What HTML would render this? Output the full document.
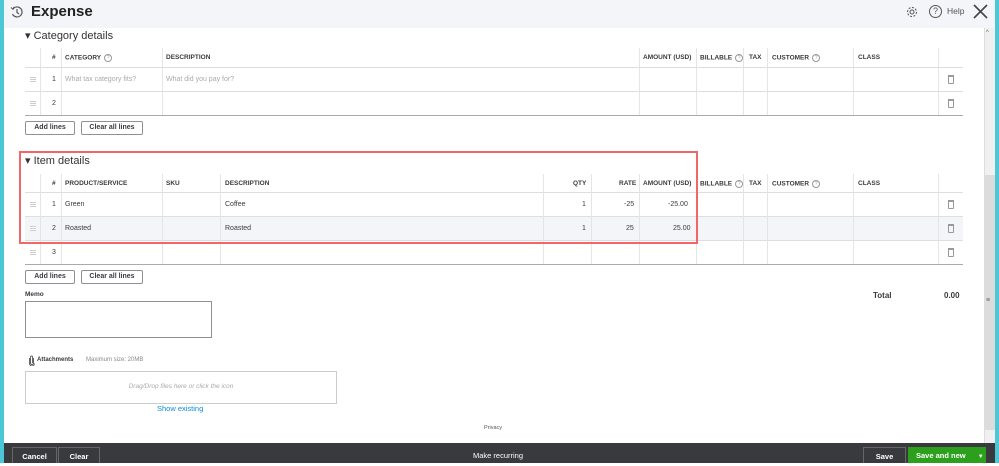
<!DOCTYPE html>
<html><head><style>
*{margin:0;padding:0;box-sizing:border-box}
body{width:999px;height:463px;position:relative;overflow:hidden;background:#fff;font-family:"Liberation Sans",sans-serif;color:#393a3d}
.a{position:absolute}
.hd{font-size:6.5px;font-weight:bold;color:#393a3d}
.t{font-size:7px}
.vl{position:absolute;width:1px;background:#e3e5e8}
.hl{position:absolute;height:1px;background:#dcdee2}
.btn{position:absolute;border:1px solid #8d9096;border-radius:2px;font-size:7px;font-weight:bold;text-align:center;line-height:12px;height:14px;background:#fff}
.trash{position:absolute;width:6px;height:9px;border:1px solid #999;border-top:2px solid #999;border-radius:0 0 1px 1px}
.drag{position:absolute;width:6px;height:5px;background:repeating-linear-gradient(#ccc 0 1px,#fff 1px 2px)}
.q{display:inline-block;width:8px;height:8px;border:1px solid #999;border-radius:50%;font-size:5px;line-height:6px;text-align:center;color:#999;font-weight:normal;vertical-align:middle;margin-left:3px}
</style></head><body>
<div class="a" style="left:0;top:0;width:4px;height:463px;background:#4cc7d6"></div>
<div class="a" style="left:995px;top:0;width:4px;height:463px;background:#4cc7d6"></div>
<div class="a" style="left:4px;top:0;width:991px;height:28px;background:#f4f5f8"></div>
<svg class="a" style="left:10px;top:5px" width="14" height="14" viewBox="0 0 14 14"><path d="M3 4A5 5 0 1 1 2.5 9" fill="none" stroke="#555" stroke-width="1.2"/><path d="M7 4v3.5l2 1.5" fill="none" stroke="#555" stroke-width="1.2"/><path d="M1 2.5l2 1.8 1-2.3" fill="none" stroke="#555" stroke-width="1"/></svg>
<div class="a" style="left:31px;top:3px;font-size:15px;font-weight:bold;color:#222">Expense</div>
<svg class="a" style="left:905px;top:5px" width="14" height="14" viewBox="0 0 14 14"><circle cx="7" cy="7" r="2" fill="none" stroke="#555"/><circle cx="7" cy="7" r="4.5" fill="none" stroke="#555" stroke-width="1" stroke-dasharray="2 1.5"/></svg>
<div class="a" style="left:929px;top:5px;width:13px;height:13px;border:1.2px solid #555;border-radius:50%;font-size:9px;text-align:center;line-height:11px;color:#555">?</div>
<div class="a" style="left:947px;top:6px;font-size:8.5px;color:#555">Help</div>
<svg class="a" style="left:973px;top:4px" width="15" height="15"><path d="M1 1L14 14M14 1L1 14" stroke="#444" stroke-width="1.6"/></svg>
<div class="a" style="left:984px;top:28px;width:11px;height:415px;background:#f0f0f0;border-left:1px solid #ddd"></div>
<div class="a" style="left:985px;top:175px;width:10px;height:255px;background:#dcdcdc"></div>
<div class="a" style="left:986px;top:30px;font-size:6px;color:#666">^</div>
<div class="a" style="left:986px;top:297px;font-size:7px;color:#666">≡</div>

<div class="a" style="left:25px;top:29px;font-size:11px;color:#333">▾ Category details</div>
<div class="hl" style="left:25px;top:67px;width:938px"></div>
<div class="hl" style="left:25px;top:91px;width:938px"></div>
<div class="hl" style="left:25px;top:115px;width:938px;background:#aaa"></div>
<div class="vl" style="left:40px;top:48px;height:67px"></div>
<div class="vl" style="left:61px;top:48px;height:67px"></div>
<div class="vl" style="left:162px;top:48px;height:67px"></div>
<div class="vl" style="left:639px;top:48px;height:67px"></div>
<div class="vl" style="left:696px;top:48px;height:67px"></div>
<div class="vl" style="left:743px;top:48px;height:67px"></div>
<div class="vl" style="left:767px;top:48px;height:67px"></div>
<div class="vl" style="left:853px;top:48px;height:67px"></div>
<div class="vl" style="left:938px;top:48px;height:67px"></div>
<div class="a hd" style="left:52px;top:54px">#</div>
<div class="a hd" style="left:65px;top:54px">CATEGORY<span class="q">?</span></div>
<div class="a hd" style="left:166px;top:54px">DESCRIPTION</div>
<div class="a hd" style="left:643px;top:54px">AMOUNT (USD)</div>
<div class="a hd" style="left:700px;top:54px">BILLABLE<span class="q">?</span></div>
<div class="a hd" style="left:749px;top:54px">TAX</div>
<div class="a hd" style="left:772px;top:54px">CUSTOMER<span class="q">?</span></div>
<div class="a hd" style="left:858px;top:54px">CLASS</div>
<div class="drag" style="left:30px;top:77px"></div><div class="a t" style="left:52px;top:76px">1</div>
<div class="a t" style="left:65px;top:76px;color:#aaa">What tax category fits?</div>
<div class="a t" style="left:166px;top:76px;color:#aaa">What did you pay for?</div>
<div class="trash" style="left:948px;top:75px"></div>
<div class="drag" style="left:30px;top:101px"></div><div class="a t" style="left:52px;top:100px">2</div>
<div class="trash" style="left:948px;top:99px"></div>
<div class="btn" style="left:25px;top:121px;width:50px">Add lines</div>
<div class="btn" style="left:81px;top:121px;width:62px">Clear all lines</div>

<div class="a" style="left:25px;top:154px;font-size:11px;color:#333">▾ Item details</div>
<div class="a" style="left:25px;top:216px;width:938px;height:24px;background:#f4f5f8"></div>
<div class="hl" style="left:25px;top:192px;width:938px"></div>
<div class="hl" style="left:25px;top:216px;width:938px"></div>
<div class="hl" style="left:25px;top:240px;width:938px"></div>
<div class="hl" style="left:25px;top:264px;width:938px;background:#aaa"></div>
<div class="vl" style="left:40px;top:174px;height:90px"></div>
<div class="vl" style="left:61px;top:174px;height:90px"></div>
<div class="vl" style="left:162px;top:174px;height:90px"></div>
<div class="vl" style="left:220px;top:174px;height:90px"></div>
<div class="vl" style="left:543px;top:174px;height:90px"></div>
<div class="vl" style="left:591px;top:174px;height:90px"></div>
<div class="vl" style="left:639px;top:174px;height:90px"></div>
<div class="vl" style="left:696px;top:174px;height:90px"></div>
<div class="vl" style="left:743px;top:174px;height:90px"></div>
<div class="vl" style="left:767px;top:174px;height:90px"></div>
<div class="vl" style="left:853px;top:174px;height:90px"></div>
<div class="vl" style="left:938px;top:174px;height:90px"></div>
<div class="a hd" style="left:52px;top:180px">#</div>
<div class="a hd" style="left:65px;top:180px">PRODUCT/SERVICE</div>
<div class="a hd" style="left:166px;top:180px">SKU</div>
<div class="a hd" style="left:225px;top:180px">DESCRIPTION</div>
<div class="a hd" style="left:573px;top:180px">QTY</div>
<div class="a hd" style="left:619px;top:180px">RATE</div>
<div class="a hd" style="left:643px;top:180px">AMOUNT (USD)</div>
<div class="a hd" style="left:700px;top:180px">BILLABLE<span class="q">?</span></div>
<div class="a hd" style="left:749px;top:180px">TAX</div>
<div class="a hd" style="left:772px;top:180px">CUSTOMER<span class="q">?</span></div>
<div class="a hd" style="left:858px;top:180px">CLASS</div>
<div class="drag" style="left:30px;top:202px"></div><div class="a t" style="left:52px;top:201px">1</div>
<div class="a t" style="left:65px;top:201px">Green</div><div class="a t" style="left:225px;top:201px">Coffee</div>
<div class="a t" style="left:582px;top:201px">1</div><div class="a t" style="left:624px;top:201px">-25</div><div class="a t" style="left:668px;top:201px">-25.00</div>
<div class="trash" style="left:948px;top:200px"></div>
<div class="drag" style="left:30px;top:226px"></div><div class="a t" style="left:52px;top:225px">2</div>
<div class="a t" style="left:65px;top:225px">Roasted</div><div class="a t" style="left:225px;top:225px">Roasted</div>
<div class="a t" style="left:582px;top:225px">1</div><div class="a t" style="left:626px;top:225px">25</div><div class="a t" style="left:673px;top:225px">25.00</div>
<div class="trash" style="left:948px;top:224px"></div>
<div class="drag" style="left:30px;top:250px"></div><div class="a t" style="left:52px;top:249px">3</div>
<div class="trash" style="left:948px;top:248px"></div>
<div class="a" style="left:19px;top:151px;width:679px;height:93px;border:2px solid #f26666"></div>
<div class="btn" style="left:25px;top:270px;width:50px">Add lines</div>
<div class="btn" style="left:81px;top:270px;width:62px">Clear all lines</div>

<div class="a" style="left:25px;top:291px;font-size:6.5px;font-weight:bold">Memo</div>
<div class="a" style="left:25px;top:301px;width:187px;height:37px;border:1px solid #8d9096"></div>
<div class="a" style="left:873px;top:291px;font-size:8px;font-weight:bold">Total</div>
<div class="a" style="left:944px;top:291px;font-size:8px;font-weight:bold">0.00</div>

<svg class="a" style="left:28px;top:355px" width="8" height="11" viewBox="0 0 8 11"><path d="M5.5 3v5a1.5 1.5 0 0 1-3 0V2a1 1 0 0 1 2 0v6" fill="none" stroke="#555" stroke-width="0.9"/><path d="M1.5 3v5.5a2.5 2.5 0 0 0 5 0" fill="none" stroke="#555" stroke-width="0.9"/></svg>
<div class="a" style="left:37px;top:357px;font-size:6px;font-weight:bold">Attachments</div>
<div class="a" style="left:86px;top:357px;font-size:6px;color:#888">Maximum size: 20MB</div>
<div class="a" style="left:25px;top:371px;width:312px;height:33px;border:1px solid #ccc;font-size:6.5px;font-style:italic;color:#aaa;text-align:center;line-height:30px">Drag/Drop files here or click the icon</div>
<div class="a" style="left:157px;top:404px;font-size:7.5px;color:#0d8bd6">Show existing</div>
<div class="a" style="left:484px;top:425px;font-size:5.5px;color:#555">Privacy</div>

<div class="a" style="left:4px;top:443px;width:991px;height:20px;background:#393a3d"></div>
<div class="a" style="left:12px;top:447px;width:45px;height:16px;border:1px solid #666;border-bottom:none;color:#fff;font-size:7.5px;font-weight:bold;text-align:center;line-height:18px">Cancel</div>
<div class="a" style="left:58px;top:447px;width:42px;height:16px;border:1px solid #666;border-bottom:none;color:#fff;font-size:7.5px;font-weight:bold;text-align:center;line-height:18px">Clear</div>
<div class="a" style="left:473px;top:451px;color:#fff;font-size:7.5px">Make recurring</div>
<div class="a" style="left:863px;top:447px;width:43px;height:16px;border:1px solid #666;border-bottom:none;color:#fff;font-size:7.5px;font-weight:bold;text-align:center;line-height:18px">Save</div>
<div class="a" style="left:908px;top:447px;width:78px;height:16px;background:#2ca01c;color:#fff;font-size:7.5px;font-weight:bold;line-height:18px;padding-left:8px">Save and new <span style="margin-left:10px;font-size:6px">▼</span></div>
</body></html>
